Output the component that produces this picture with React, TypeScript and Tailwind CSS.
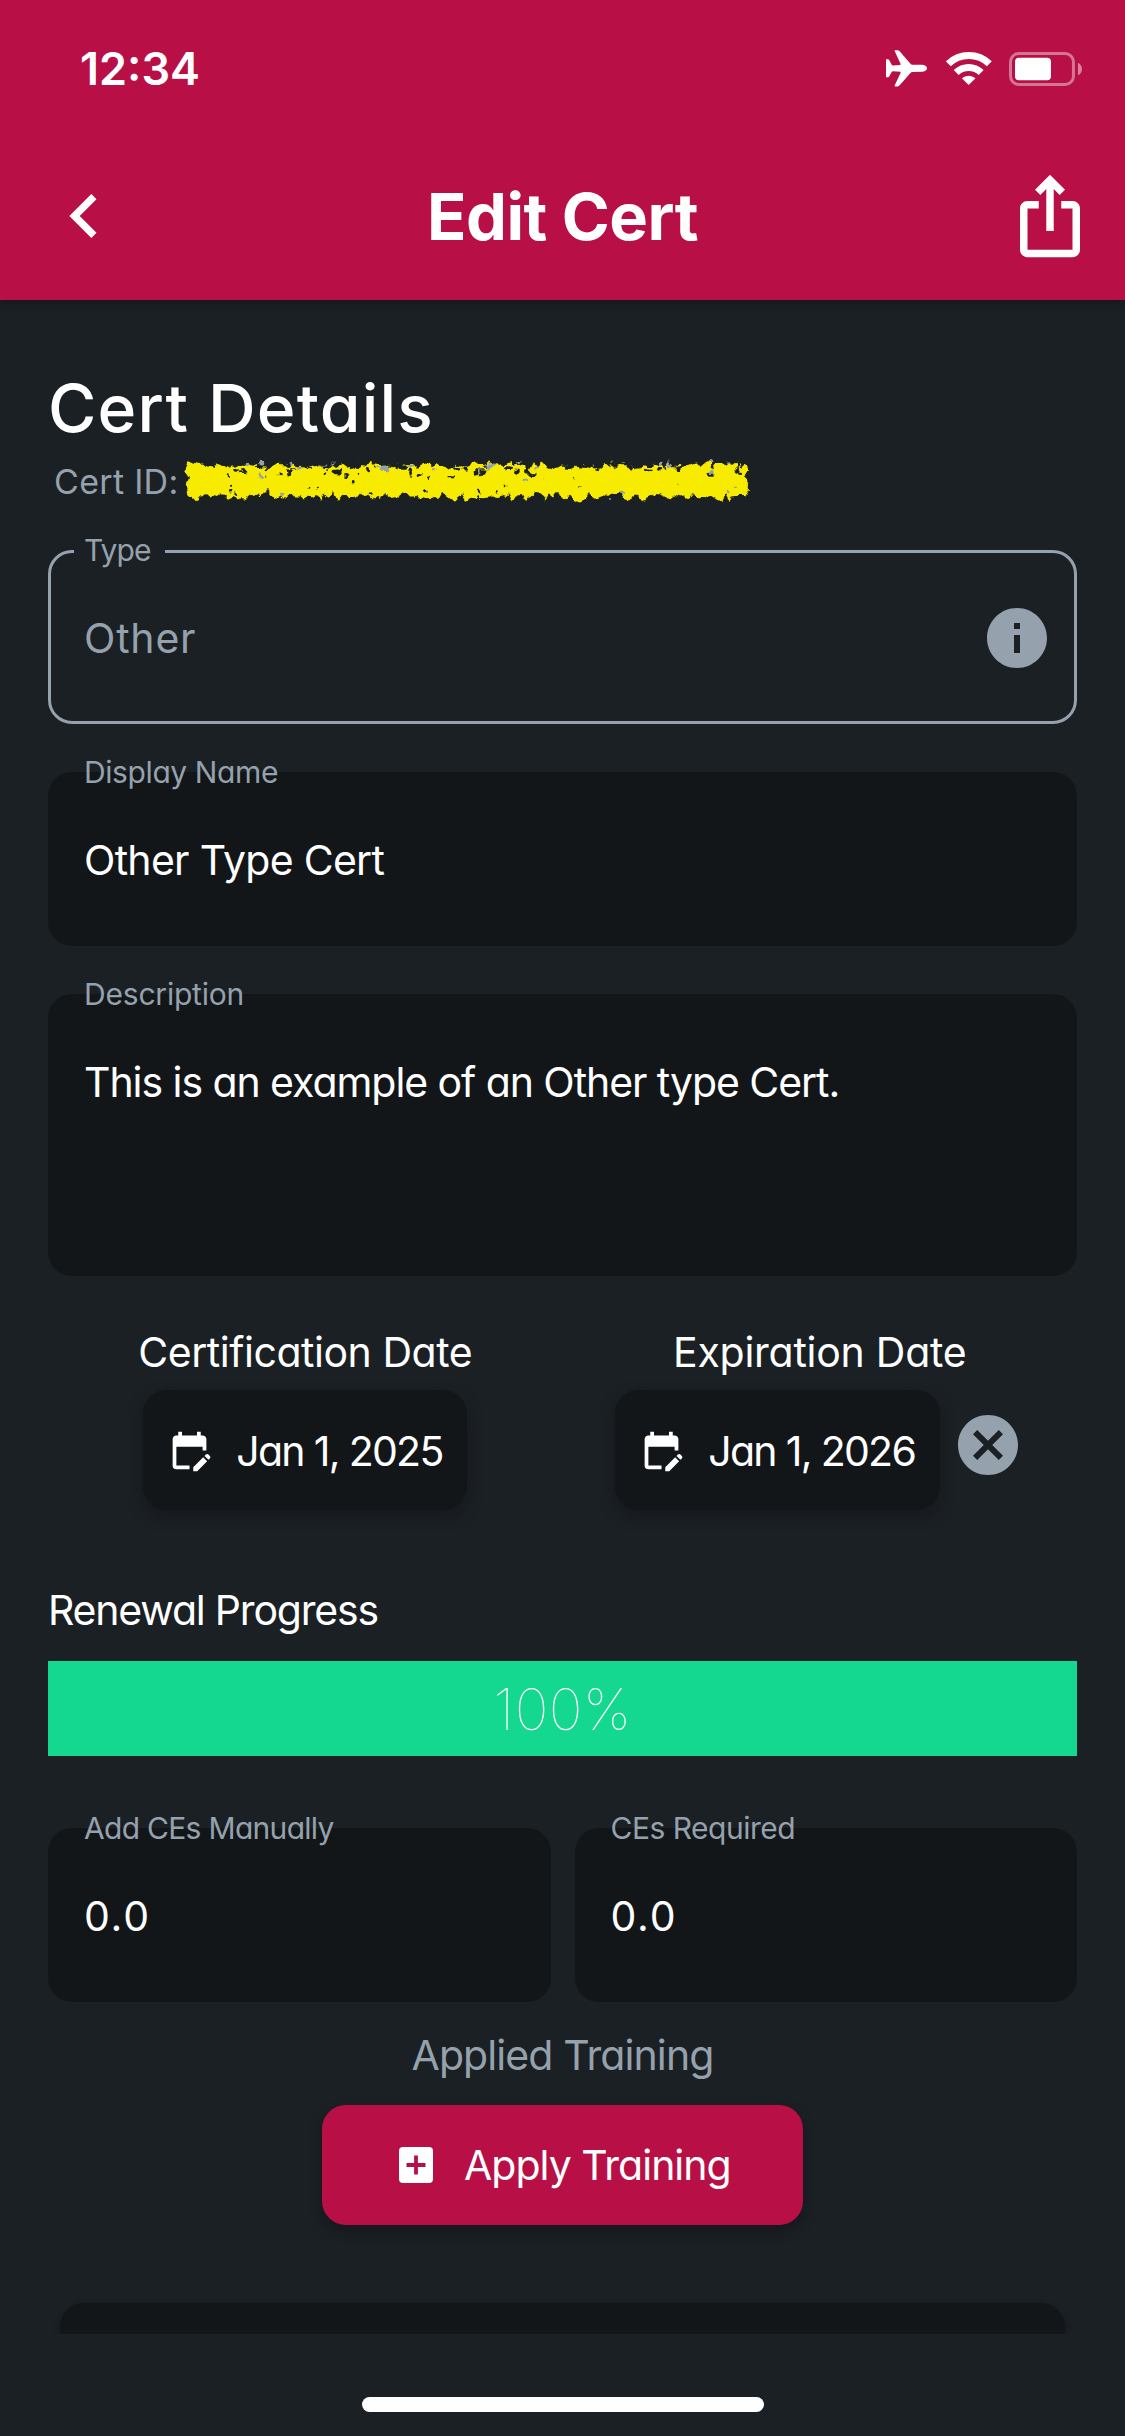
import type { ReactNode } from 'react';
import { MdCancel, MdInfo } from 'react-icons/md';

function AirplaneIcon() {
  return (
    <svg viewBox="78 92 124 110" className="h-[36.7px] w-[41.3px]" fill="currentColor">
      <path d="M201 147 C201 141 194 136.500 184 136.500 L158 136 C155 136 153.500 135 151.500 133 L119 96 C117 93.500 114.500 92.500 112 92.500 L106 92.500 C104 92.500 103.500 94 104.300 96 L122 134 L121 137 L99 138.500 C97 138.500 96 137.500 95 136 L88 123 C87 121 85.500 120 83.500 120 L78 120 L78 174 L83.500 174 C85.500 174 87 173 88 171 L95 158 C96 156.500 97 155.500 99 155.500 L121 157 L122 160 L104.300 198 C103.500 200 104 201.500 106 201.500 L112 201.500 C114.500 201.500 117 200.500 119 198 L151.500 161 C153.500 159 155 158 158 158 L184 157.500 C194 157.500 201 153 201 147 Z" />
    </svg>
  );
}

function WifiIcon() {
  return (
    <svg viewBox="259 96 137 99" className="h-[33px] w-[45.700px]" fill="none" stroke="currentColor" strokeWidth="21">
      <path d="M266 131.500 A88.500 88.500 0 0 1 389 131.500" />
      <path d="M289.500 157.500 A54 54 0 0 1 364.500 157.500" />
      <path d="M327 195 L306.500 175 A30 30 0 0 1 347.500 175 Z" fill="currentColor" stroke="none" />
    </svg>
  );
}

function BatteryIcon() {
  return (
    <svg viewBox="0 0 220 102" className="h-[34px] w-[73.300px]" fill="currentColor">
      <rect x="4.500" y="4.500" width="189" height="93" rx="25" fill="none" stroke="currentColor" strokeWidth="9" opacity="0.42" />
      <rect x="18" y="17" width="108" height="68" rx="12" />
      <path d="M207 32 C214 35 219 42 219 51 C219 60 214 67 207 70 Z" opacity="0.48" />
    </svg>
  );
}

function BackIcon() {
  return (
    <svg viewBox="0 0 24 24" className="size-[88px]" fill="currentColor">
      <path d="M15.410 7.410 14 6l-6 6 6 6 1.410-1.410L10.830 12z" />
    </svg>
  );
}

function ShareIcon() {
  return (
    <svg viewBox="0 0 24 24" className="size-[90px]" fill="currentColor">
      <path d="m16 5-1.420 1.420-1.590-1.590V16h-1.980V4.830L9.420 6.420 8 5l4-4 4 4zm4 5v11c0 1.100-.9 2-2 2H6c-1.110 0-2-.9-2-2V10c0-1.110.89-2 2-2h3v2H6v11h12V10h-3V8h3c1.100 0 2 .89 2 2z" />
    </svg>
  );
}

function EditCalendarIcon() {
  return (
    <svg viewBox="0 0 24 24" className="size-[45px] shrink-0" fill="currentColor">
      <path d="M12 22H5a2 2 0 0 1-2-2l.01-14c0-1.100.88-2 1.990-2h1V2h2v2h8V2h2v2h1c1.100 0 2 .9 2 2v6h-2v-2H5v10h7v2zm10.130-5.010.71-.71a.996.996 0 0 0 0-1.410l-.71-.71a.996.996 0 0 0-1.410 0l-.71.71 2.120 2.120zm-.71.71-5.300 5.300H14v-2.120l5.300-5.300 2.120 2.120z" />
    </svg>
  );
}

function AddBoxIcon() {
  return (
    <svg viewBox="0 0 34 36" className="h-9 w-[34px] shrink-0">
      <rect width="34" height="36" rx="4" fill="#fff" />
      <path d="M17 8.500v19M7.500 18h19" stroke="#b81046" strokeWidth="3.800" />
    </svg>
  );
}

function seeded(seed: number) {
  let s = seed;
  return () => {
    s = (s * 16807) % 2147483647;
    return s / 2147483647;
  };
}

/* Crayon stroke laid over the certificate number. */
function Redaction() {
  const rnd = seeded(4177);
  const top: string[] = [];
  const bottom: string[] = [];
  for (let x = 5; x <= 561; x += 4) {
    top.push(`${x},${(2 + rnd() * 8).toFixed(1)}`);
    bottom.unshift(`${x},${(33 + rnd() * 9).toFixed(1)}`);
  }
  const blots = Array.from({ length: 150 }, () => ({
    x: 30 + rnd() * 530,
    y: 3 + rnd() * rnd() * 15,
    rx: 1 + rnd() * 3.2,
    ry: 0.8 + rnd() * 1.8,
    gray: rnd() > 0.86,
  }));
  const specks = Array.from({ length: 36 }, () => ({
    x: 8 + rnd() * 548,
    y: 15 + rnd() * 25,
    r: 0.5 + rnd() * 1.4,
  }));
  return (
    <svg viewBox="0 0 568 46" className="h-[46px] w-[568px]">
      <defs>
        <filter id="rough" x="-2%" y="-15%" width="104%" height="130%">
          <feTurbulence type="fractalNoise" baseFrequency="0.09" numOctaves="2" seed="8" result="n" />
          <feDisplacementMap in="SourceGraphic" in2="n" scale="10" xChannelSelector="R" yChannelSelector="G" />
        </filter>
      </defs>
      <g filter="url(#rough)">
        <polygon points={`${top.join(' ')} 566,12 561,20 566,30 ${bottom.join(' ')} 2,28 5,20 1,14`} fill="#f7ec00" />
        {blots.map((b, i) => (
          <ellipse key={i} cx={b.x} cy={b.y} rx={b.rx} ry={b.ry} fill={b.gray ? '#95a1ac' : '#1b2024'} />
        ))}
        {specks.map((b, i) => (
          <circle key={i} cx={b.x} cy={b.y} r={b.r} fill={i % 5 === 0 ? '#95a1ac' : '#1b2024'} />
        ))}
      </g>
    </svg>
  );
}

interface FieldProps {
  label: string;
  labelClass: string;
  value: string;
  valueClass: string;
  boxClass: string;
}

function Field({ label, labelClass, value, valueClass, boxClass }: FieldProps) {
  return (
    <div className={`relative rounded-3xl bg-[#121619] px-9 ${boxClass}`}>
      <label className={`absolute -top-4 left-9 text-[30px] leading-8 whitespace-nowrap text-[#95a1ac] ${labelClass}`}>{label}</label>
      <div className={`pt-[62px] text-[41px] leading-[52px] whitespace-nowrap ${valueClass}`}>{value}</div>
    </div>
  );
}

function DateColumn({ title, titleClass, date, buttonClass, children }: { title: string; titleClass: string; date: string; buttonClass: string; children?: ReactNode }) {
  return (
    <div className="flex flex-1 flex-col items-center">
      <div className={`text-[41px] leading-[52px] whitespace-nowrap ${titleClass}`}>{title}</div>
      <div className="mt-3 flex items-start">
        <button className={`flex h-[120px] items-center gap-6 rounded-3xl bg-[#121619] pl-6 text-[41px] tracking-[-1.700px] whitespace-nowrap shadow-[0_6px_14px_rgba(18,16,22,0.5)] ${buttonClass}`}>
          <EditCalendarIcon />
          <span className="pt-[3px]">{date}</span>
        </button>
        {children}
      </div>
    </div>
  );
}

export default function App() {
  return (
    <div className="flex h-[2436px] w-[1125px] flex-col overflow-hidden bg-[#1b2024] font-['Inter',sans-serif] text-white [font-feature-settings:'cv11']">
      <header className="relative h-[300px] shrink-0 bg-[#b81046] shadow-[0_4px_8px_rgba(0,0,0,0.25)]">
        <div className="flex h-[137px] items-center justify-between pr-[43px] pl-20">
          <span className="text-[45px] font-semibold">12:34</span>
          <div className="flex items-center">
            <AirplaneIcon />
            <span className="ml-[19px] flex"><WifiIcon /></span>
            <span className="ml-[17px] flex"><BatteryIcon /></span>
          </div>
        </div>
        <div className="grid h-[158px] grid-cols-[1fr_auto_1fr] items-center px-[30px]">
          <span className="pl-2.5"><BackIcon /></span>
          <h1 className="pt-0.5 text-[65px] font-bold tracking-[-0.500px]">Edit Cert</h1>
          <span className="justify-self-end"><ShareIcon /></span>
        </div>
      </header>

      <main className="flex min-h-0 flex-1 flex-col overflow-hidden px-12">
        <h2 className="mt-[69px] text-[66px] leading-[78px] font-medium tracking-[1.200px]">Cert Details</h2>
        <div className="mt-[13px] flex h-11 shrink-0 items-center pl-1.5">
          <span className="w-[130px] pb-0.5 text-[34px] tracking-[0.300px] whitespace-nowrap text-[#95a1ac]">Cert ID:</span>
          <Redaction />
        </div>

        <div className="relative mt-[46px] flex h-[174px] shrink-0 items-center justify-between rounded-3xl border-3 border-[#95a1ac] pr-[21px] pl-[33px] text-[#95a1ac]">
          <label className="absolute -top-[19px] left-[23px] bg-[#1b2024] pr-[14px] pl-2.5 text-[30px] leading-8 tracking-[-0.900px]">Type</label>
          <span className="pt-[3px] text-[41px] tracking-[0.800px]">Other</span>
          <MdInfo className="mt-0.5 size-[72px]" />
        </div>

        <Field label="Display Name" labelClass="tracking-[-0.400px]" value="Other Type Cert" valueClass="tracking-[-0.700px]" boxClass="mt-12 h-[174px] shrink-0" />
        <Field label="Description" labelClass="tracking-[-0.200px]" value="This is an example of an Other type Cert." valueClass="tracking-[-1.060px]" boxClass="mt-12 h-[282px] shrink-0" />

        <div className="mt-[50px] flex shrink-0">
          <DateColumn title="Certification Date" titleClass="tracking-[-0.450px]" date="Jan 1, 2025" buttonClass="w-[324px]" />
          <DateColumn title="Expiration Date" titleClass="tracking-[-0.250px]" date="Jan 1, 2026" buttonClass="w-[325px]">
            <span className="mt-[19px] ml-3 flex">
              <MdCancel className="size-[72px] text-[#95a1ac]" />
            </span>
          </DateColumn>
        </div>

        <div className="mt-[74px] text-[41px] leading-[52px] tracking-[-1.200px]">Renewal Progress</div>
        <div className="mt-[25px] flex h-[95px] shrink-0 items-center justify-center bg-[#14d790] pt-0.5 text-[57px] font-thin tracking-[0.500px]">100%</div>

        <div className="mt-[72px] grid shrink-0 grid-cols-2 gap-6">
          <Field label="Add CEs Manually" labelClass="tracking-[-0.700px]" value="0.0" valueClass="tracking-[1.800px]" boxClass="h-[174px]" />
          <Field label="CEs Required" labelClass="tracking-[-0.500px]" value="0.0" valueClass="tracking-[1.800px]" boxClass="h-[174px]" />
        </div>

        <div className="mt-[27px] text-center text-[41px] leading-[52px] tracking-[-0.900px] text-[#95a1ac]">Applied Training</div>
        <button className="mt-6 flex h-[120px] w-[481px] shrink-0 items-center gap-[31px] self-center rounded-3xl bg-[#b81046] pl-[77px] text-[41px] tracking-[-1.000px] whitespace-nowrap shadow-[0_6px_12px_rgba(16,14,20,0.5)]">
          <AddBoxIcon />
          <span className="pt-px">Apply Training</span>
        </button>

        <div className="mx-3 mt-[78px] h-[120px] shrink-0 rounded-3xl bg-[#121619] shadow-[0_3px_6px_rgba(18,16,22,0.4)]" />
      </main>

      <footer className="flex h-[102px] shrink-0 justify-center pt-[63px]">
        <div className="h-[15px] w-[402px] rounded-full bg-white" />
      </footer>
    </div>
  );
}
